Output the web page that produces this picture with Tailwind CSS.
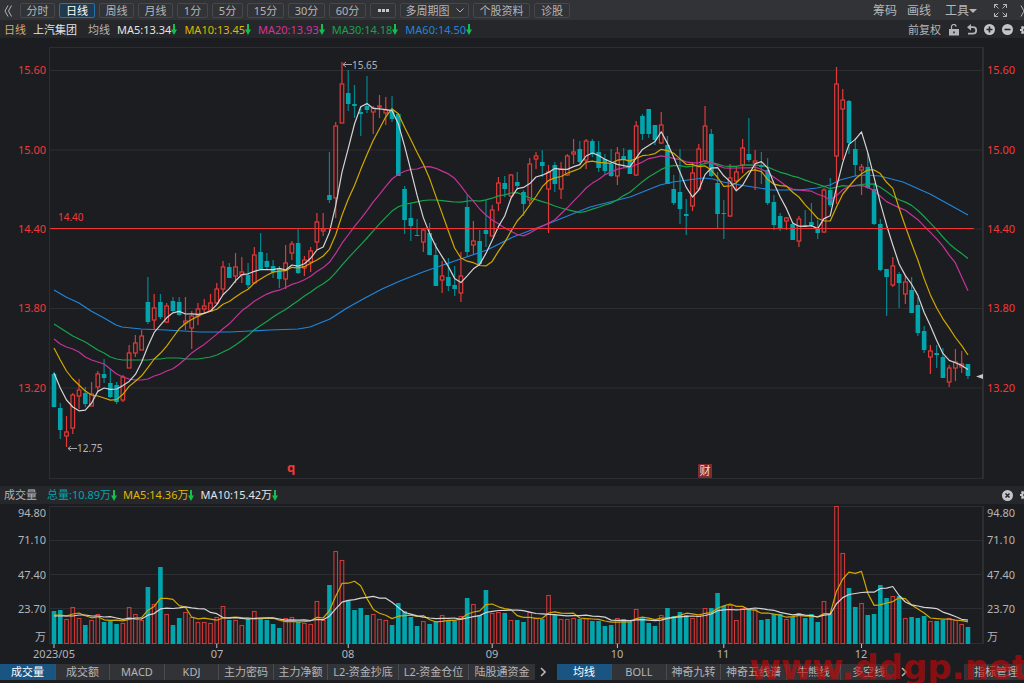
<!DOCTYPE html>
<html lang="zh-CN">
<head>
  <meta charset="UTF-8" />
  <meta name="viewport" content="width=device-width, initial-scale=1.0" />
  <title>上汽集团 日线</title>
  <script src="https://cdn.jsdelivr.net/npm/@tailwindcss/browser@4"></script>
</head>
<body class="bg-[#1c1d20] text-[11px] text-[#b4b5b8] font-['Noto_Sans','Noto_Sans_CJK_SC',sans-serif] overflow-x-hidden">
  <main class="relative overflow-hidden">

    <!-- toolbar -->
    <nav class="flex items-center h-5 pt-px bg-[#323337] overflow-hidden whitespace-nowrap">
      <button aria-label="收起" class="w-5 shrink-0 flex justify-center pr-1">
        <svg class="w-2 h-3" viewBox="0 0 8 12" fill="none" stroke="currentColor"><path d="M4 .5 1 6l3 5.500M7.500 .5l-3 5.500 3 5.500" /></svg>
      </button>
      <div class="flex gap-1 leading-[13px]">
        <button class="w-[35px] h-[15px] border border-[#46474b] rounded-xs">分时</button>
        <button class="w-9 h-[15px] border border-[#2474ac] rounded-xs bg-[#1f3a4f] text-white">日线</button>
        <button class="w-[35px] h-[15px] border border-[#46474b] rounded-xs">周线</button>
        <button class="w-[35px] h-[15px] border border-[#46474b] rounded-xs">月线</button>
        <button class="w-[31px] h-[15px] border border-[#46474b] rounded-xs">1分</button>
        <button class="w-[31px] h-[15px] border border-[#46474b] rounded-xs">5分</button>
        <button class="w-[37px] h-[15px] border border-[#46474b] rounded-xs">15分</button>
        <button class="w-[37px] h-[15px] border border-[#46474b] rounded-xs">30分</button>
        <button class="w-[37px] h-[15px] border border-[#46474b] rounded-xs">60分</button>
        <button aria-label="更多周期" class="w-[26px] h-[15px] border border-[#46474b] rounded-xs flex items-center justify-center gap-px">
          <i class="w-[3px] h-[3px] bg-[#c4c5c8]"></i><i class="w-[3px] h-[3px] bg-[#c4c5c8]"></i><i class="w-[3px] h-[3px] bg-[#c4c5c8]"></i>
        </button>
        <button class="w-[69px] h-[15px] border border-[#46474b] rounded-xs flex items-center justify-center gap-1.5">多周期图
          <svg class="w-2 h-[5px]" viewBox="0 0 8 5" fill="none" stroke="currentColor"><path d="M.5 .5 4 4 7.500 .5" /></svg>
        </button>
        <button class="w-[57px] h-[15px] border border-[#46474b] rounded-xs">个股资料</button>
        <button class="w-9 h-[15px] border border-[#46474b] rounded-xs">诊股</button>
      </div>
      <div class="ml-auto flex items-center text-xs leading-4">
        <button class="mr-2.5">筹码</button>
        <button class="mr-3.5">画线</button>
        <button class="flex items-center mr-[17px]">工具
          <svg class="w-2 h-1" viewBox="0 0 8 4" fill="currentColor"><path d="M0 0h8L4 4z" /></svg>
        </button>
        <button aria-label="全屏">
          <svg class="w-[13px] h-[13px]" viewBox="0 0 13 13" fill="none" stroke="currentColor"><path d="M.5 4V.5H4M.5 .5l4 4M9 .5h3.500V4M12.500 .5l-4 4M.5 9v3.500H4M.5 12.500l4-4M9 12.500h3.500V9M12.500 12.500l-4-4" /></svg>
        </button>
        <button aria-label="展开" class="ml-[13px] w-1 overflow-hidden">
          <svg class="w-2 h-3" viewBox="0 0 8 12" fill="none" stroke="currentColor"><path d="M1 .5 4 6l-3 5.500M4.500 .5l3 5.500-3 5.500" /></svg>
        </button>
      </div>
    </nav>

    <!-- moving averages legend -->
    <header class="flex items-center h-[18px] pl-1 pt-px bg-[#26272a] overflow-hidden whitespace-nowrap leading-[18px]">
      <span class="text-[#dca671] mr-[7px]">日线</span>
      <h1 class="text-[#e4e4e6] mr-[11px]">上汽集团</h1>
      <span class="mr-[7px]">均线</span>
      <ul class="flex gap-[7px]">
        <li class="flex items-center text-[#e4e4e6]">MA5:13.34<svg class="w-[6px] h-[11px]"><use href="#down" /></svg></li>
        <li class="flex items-center text-[#dfb800]">MA10:13.45<svg class="w-[6px] h-[11px]"><use href="#down" /></svg></li>
        <li class="flex items-center text-[#d4339c]">MA20:13.93<svg class="w-[6px] h-[11px]"><use href="#down" /></svg></li>
        <li class="flex items-center text-[#16a44c]">MA30:14.18<svg class="w-[6px] h-[11px]"><use href="#down" /></svg></li>
        <li class="flex items-center text-[#1f86dc]">MA60:14.50<svg class="w-[6px] h-[11px]"><use href="#down" /></svg></li>
      </ul>
      <div class="ml-auto flex items-center">
        <button class="mr-2">前复权</button>
        <button aria-label="锁定" class="mr-2">
          <svg class="w-2.5 h-3" viewBox="0 0 10 12"><path d="M2.500 5V3a2.300 2.300 0 0 1 4.600-.4" fill="none" stroke="currentColor" stroke-width="1.200" /><path fill="currentColor" fill-rule="evenodd" d="M0 5h10v6.500H0zM4.200 7.500h1.600v1.800H4.200z" /></svg>
        </button>
        <button aria-label="撤销" class="mr-[7px]">
          <svg class="w-2.5 h-[11px]" viewBox="0 0 10 11"><path d="M2.500 3.200H6a3.200 3.200 0 0 1 0 6.400H1" fill="none" stroke="currentColor" stroke-width="1.700" /><path fill="currentColor" d="M0 3.200 4 0v6.400z" /></svg>
        </button>
        <button aria-label="放大" class="mr-[7px]">
          <svg class="w-[11px] h-[11px]" viewBox="0 0 11 11"><circle cx="5.500" cy="5.500" r="5.500" fill="#c4c5c8" /><path d="M5.500 2.500v6M2.500 5.500h6" stroke="#26272a" stroke-width="1.600" /></svg>
        </button>
        <button aria-label="缩小" class="mr-[7px]">
          <svg class="w-[11px] h-[11px]" viewBox="0 0 11 11"><circle cx="5.500" cy="5.500" r="5.500" fill="#c4c5c8" /><path d="M2.500 5.500h6" stroke="#26272a" stroke-width="1.600" /></svg>
        </button>
        <button aria-label="设置" class="w-1 overflow-hidden"><svg class="w-2.5 h-2.5"><use href="#gear" /></svg></button>
      </div>
    </header>

    <!-- price chart -->
    <svg class="block w-full h-auto" viewBox="0 38 1024 448" role="img" aria-label="日K线">
      <g fill="none" class="stroke-[#2d2e32]">
        <path d="M49.500 47.500H983M49.500 478.500H983M50 70.500h933M50 150h933M50 229h933M50 308.500h933M50 388h933M49.500 47v432" />
        <path d="M983 47v432" stroke-width="2" />
      </g>
      <g id="candles" stroke-width="1.200"></g>
      <g id="averages" fill="none" stroke-width="1.200" stroke-linejoin="round"></g>
      <path d="M50 228.500h924" class="stroke-[#ee3434]" stroke-width="1.200" />
      <g class="fill-[#f03a3a]">
        <g text-anchor="end">
          <text x="46" y="74">15.60</text><text x="46" y="154">15.00</text><text x="46" y="233">14.40</text><text x="46" y="312">13.80</text><text x="46" y="392">13.20</text>
        </g>
        <text x="987" y="74">15.60</text><text x="987" y="154">15.00</text><text x="987" y="233">14.40</text><text x="987" y="312">13.80</text><text x="987" y="392">13.20</text>
        <text x="58" y="221" class="text-[10px]">14.40</text>
        <text x="287" y="472" class="text-[13px] font-bold">q</text>
      </g>
      <g class="fill-[#b4b5b8] text-[10px]">
        <text x="352" y="69">15.65</text>
        <text x="77" y="452">12.75</text>
      </g>
      <path d="M343 64.500h9M346 62l-3 2.500 3 2.500M68 448.500h9M71 446l-3 2.500 3 2.500" fill="none" class="stroke-[#a4a5a8]" />
      <path d="M976 376.500l7-2.500v5z" class="fill-[#c4c5c8]" />
      <rect x="698" y="464" width="14" height="14" rx="1" class="fill-[#842a2e]" />
      <text x="705" y="475" text-anchor="middle" class="fill-[#e8dede] text-[11px]">财</text>
    </svg>

    <!-- volume legend -->
    <header class="flex items-center h-[18px] pl-1 bg-[#26272a] overflow-hidden whitespace-nowrap leading-[18px]">
      <h2 class="mr-2.5">成交量</h2>
      <ul class="flex gap-1.5">
        <li class="flex items-center text-[#00a5ad]">总量:10.89万<svg class="w-[6px] h-[11px]"><use href="#down" /></svg></li>
        <li class="flex items-center text-[#dfb800]">MA5:14.36万<svg class="w-[6px] h-[11px]"><use href="#down" /></svg></li>
        <li class="flex items-center text-[#e4e4e6]">MA10:15.42万<svg class="w-[6px] h-[11px]"><use href="#down" /></svg></li>
      </ul>
      <div class="ml-auto flex items-center">
        <button aria-label="关闭" class="mr-[7px]">
          <svg class="w-[11px] h-[11px]" viewBox="0 0 11 11"><circle cx="5.500" cy="5.500" r="5.500" fill="#c4c5c8" /><path d="M3.500 3.500l4 4M7.500 3.500l-4 4" stroke="#26272a" stroke-width="1.500" /></svg>
        </button>
        <button aria-label="设置" class="w-1 overflow-hidden"><svg class="w-2.5 h-2.5"><use href="#gear" /></svg></button>
      </div>
    </header>

    <!-- volume chart -->
    <svg class="block w-full h-auto" viewBox="0 504 1024 160" role="img" aria-label="成交量">
      <g fill="none" class="stroke-[#2d2e32]">
        <path d="M49.500 506.500H983M50 540.500h933M50 574.500h933M50 608.500h933M50 643.500h933M49.500 506v138" />
        <path d="M983 506v138" stroke-width="2" />
      </g>
      <g id="volumes" stroke-width="1.100"></g>
      <g id="volumeAverages" fill="none" stroke-width="1.200" stroke-linejoin="round"></g>
      <path id="ticks" class="stroke-[#c4c5c8]" />
      <g class="fill-[#b4b5b8]">
        <g text-anchor="end">
          <text x="46" y="517">94.80</text><text x="46" y="544">71.10</text><text x="46" y="579">47.40</text><text x="46" y="613">23.70</text><text x="46" y="641">万</text>
        </g>
        <text x="987" y="517">94.80</text><text x="987" y="544">71.10</text><text x="987" y="579">47.40</text><text x="987" y="613">23.70</text><text x="987" y="641">万</text>
        <g text-anchor="middle">
          <text x="54" y="658">2023/05</text><text x="217" y="658">07</text><text x="348" y="658">08</text><text x="492" y="658">09</text><text x="617" y="658">10</text><text x="723" y="658">11</text><text x="861" y="658">12</text>
        </g>
      </g>
    </svg>

    <!-- indicator tabs -->
    <footer class="flex items-center mb-[3px] h-4 leading-4 whitespace-nowrap overflow-hidden">
      <div class="flex divide-x divide-[#4a4b4f] bg-[#323337]">
        <button class="w-14 h-4 bg-[#1a5480] text-white">成交量</button>
        <button class="w-[54px] h-4">成交额</button>
        <button class="w-[55px] h-4">MACD</button>
        <button class="w-[54px] h-4">KDJ</button>
        <button class="w-[55px] h-4">主力密码</button>
        <button class="w-[54px] h-4">主力净额</button>
        <button class="w-[71px] h-4">L2-资金抄底</button>
        <button class="w-[70px] h-4">L2-资金仓位</button>
        <button class="w-[66px] h-4">陆股通资金</button>
      </div>
      <button aria-label="更多指标" class="w-[22px] flex justify-center pr-1.5">
        <svg class="w-1.5 h-2.5" viewBox="0 0 6 10" fill="none" stroke="currentColor" stroke-width="1.600"><path d="M1 1l4 4-4 4" /></svg>
      </button>
      <div class="flex divide-x divide-[#4a4b4f] bg-[#323337]">
        <button class="w-[55px] h-4 bg-[#1a5480] text-white">均线</button>
        <button class="w-[55px] h-4">BOLL</button>
        <button class="w-[54px] h-4">神奇九转</button>
        <button class="w-[66px] h-4">神奇五线谱</button>
        <button class="w-[54px] h-4">牛熊线</button>
        <button class="w-[55px] h-4">多空线</button>
      </div>
      <button aria-label="更多均线" class="w-4 flex justify-center">
        <svg class="w-1.5 h-2.5" viewBox="0 0 6 10" fill="none" stroke="currentColor" stroke-width="1.600"><path d="M1 1l4 4-4 4" /></svg>
      </button>
      <button class="ml-auto w-[60px] h-4 pl-1 bg-[#323337]">指标管理</button>
    </footer>

    <p class="absolute -right-1 bottom-0 text-[34px] leading-8 font-bold font-['DejaVu_Sans',sans-serif] text-[#c80808]/65 pointer-events-none">www.ddgp.net</p>
  </main>

  <svg class="hidden">
    <symbol id="down" viewBox="0 0 6 11"><path d="M2 0h2v5.500h2L3 11 0 5.500h2z" fill="#12c04e" /></symbol>
    <symbol id="gear" viewBox="0 0 10 10"><circle cx="5" cy="5" r="2.800" fill="none" stroke="#c4c5c8" stroke-width="2" /><path d="M5 0v2M5 8v2M0 5h2M8 5h2M1.500 1.500l1.400 1.400M7.100 7.100l1.400 1.400M1.500 8.500l1.400-1.400M7.100 2.900l1.400-1.400" stroke="#c4c5c8" stroke-width="1.800" /></symbol>
  </svg>

  <script>
    // one entry per day: direction, wick top, body top, body bottom, wick bottom, volume top
    const days = `
      d 372 374 407 407 611|d 403 408 430 439 610|u 416 432 436 447 619|u 393 395 428 434 607|u 379 390 396 409 618|
      d 387 393 404 407 625|u 382 394 406 406 620|u 371 374 387 392 614|d 359 374 378 383 622|d 369 383 397 398 621|
      d 382 385 402 404 624|u 375 377 400 402 623|u 345 353 368 368 607|u 335 343 353 357 614|u 330 336 350 350 620|
      d 277 302 322 324 587|u 294 308 320 330 604|d 294 302 317 319 567|u 303 306 322 323 614|d 297 301 311 312 625|
      d 297 302 315 316 618|u 297 321 323 330 612|u 311 316 328 349 617|u 303 309 316 325 622|u 299 306 309 313 622|
      u 294 303 311 312 623|u 283 289 303 305 617|u 261 267 289 295 606|d 263 267 278 278 620|u 253 267 276 283 620|
      u 257 272 275 283 625|d 263 275 285 288 618|u 247 255 283 284 611|d 233 252 269 270 618|d 253 261 267 269 620|
      d 260 266 272 278 624|d 266 268 279 288 628|u 245 263 279 289 618|u 241 244 253 260 617|d 229 243 273 274 622|
      u 256 260 268 276 623|u 247 251 262 272 624|u 213 222 242 250 601|u 213 229 231 236 620|d 152 195 200 203 585|
      u 122 126 198 218 551|u 62 84 123 123 560|d 70 93 104 111 600|d 85 104 106 118 610|d 106 112 114 136 608|
      d 76 106 110 113 615|u 106 108 112 134 614|u 95 106 107 118 619|u 97 110 113 125 620|d 96 110 119 122 625|
      d 113 114 176 176 603|d 186 189 220 234 611|d 204 218 226 241 617|d 219 235 236 236 626|u 228 230 242 252 621|
      d 223 233 255 255 624|d 243 255 286 286 621|u 261 276 280 293 615|d 258 277 286 291 621|d 266 285 289 296 621|
      u 252 276 293 302 616|d 195 207 252 257 598|u 221 241 245 254 604|d 230 241 264 264 615|d 200 230 234 247 590|
      u 205 210 236 236 613|u 177 183 203 211 612|d 176 183 189 197 613|u 174 175 196 197 620|d 172 182 186 190 620|
      d 190 192 204 216 622|u 158 164 200 204 612|u 152 156 159 169 618|d 150 162 166 177 619|u 165 172 189 233 595|
      d 162 165 184 192 615|u 162 169 189 199 619|u 154 156 175 176 619|u 139 152 154 164 618|d 141 149 162 165 619|
      u 139 141 160 169 618|d 139 141 154 157 621|d 141 152 168 172 621|d 154 159 171 175 626|d 149 164 176 177 625|
      u 147 153 176 185 618|d 148 156 160 168 619|d 149 150 174 174 622|u 121 126 175 176 609|d 114 116 134 140 618|
      d 109 109 134 138 623|d 125 125 140 145 626|u 112 125 143 144 615|d 136 145 184 184 608|d 175 189 203 205 616|
      d 149 192 209 224 612|d 199 214 216 235 615|u 162 173 206 211 618|u 144 149 189 190 614|u 106 126 161 163 608|
      d 129 134 176 177 608|d 172 183 214 228 593|d 200 213 214 239 606|u 164 178 216 217 605|u 167 172 181 190 620|
      u 139 148 165 173 608|d 118 154 160 162 609|u 150 161 163 190 609|d 152 165 167 184 620|d 158 170 203 205 619|
      d 195 202 225 230 614|d 213 216 229 231 614|u 217 218 221 230 619|d 222 224 240 240 617|u 216 219 241 247 613|
      d 210 225 226 227 618|d 203 222 225 227 614|d 220 228 233 239 622|u 188 190 232 233 601|d 178 190 205 207 613|
      u 67 84 156 204 506|u 89 100 109 160 553|d 100 101 143 154 588|d 138 149 165 176 607|u 164 167 170 195 603|
      d 153 167 188 189 615|d 183 189 224 225 614|d 219 224 270 271 585|d 269 269 277 316 598|u 257 266 285 287 596|
      d 272 274 283 308 596|u 275 282 294 304 618|d 277 290 313 313 617|d 297 305 333 336 618|d 326 331 350 353 616|
      u 345 351 357 374 621|d 345 353 355 368 621|d 348 357 378 378 620|u 365 368 382 387 618|u 349 362 368 381 620|
      u 351 364 367 373 624|d 364 364 376 379 627`.split("|").map((row) => {
        const [dir, ...n] = row.trim().split(" ");
        const [high, top, bottom, low, vol] = n.map(Number);
        return { up: dir === "u", high, top, bottom, low, vol, close: dir === "u" ? top : bottom };
      });

    const x = (i) => 54 + i * 6.26;
    const volumeBase = 643;

    // moving average, the first values come from days before the visible range
    function average(values, n, lead) {
      return values.map((v, i) => {
        if (i < lead.length) return lead[i];
        const part = values.slice(Math.max(0, i - n + 1), i + 1);
        return part.reduce((a, b) => a + b, 0) / part.length;
      });
    }

    function line(values, cls) {
      const points = values.map((v, i) => `${x(i).toFixed(1)},${v.toFixed(1)}`).join(" ");
      return `<polyline class="${cls}" points="${points}" />`;
    }

    document.getElementById("candles").innerHTML = days.map((d, i) => {
      const h = Math.max(d.bottom - d.top, 1);
      if (d.up) {
        return `<path class="stroke-[#e23a3a]" d="M${x(i)} ${d.high}V${d.top}M${x(i)} ${d.bottom}V${d.low}" />
          <rect class="stroke-[#e23a3a]" fill="none" x="${x(i) - 1.8}" y="${d.top}" width="3.6" height="${h}" />`;
      }
      return `<path class="stroke-[#00888f]" d="M${x(i)} ${d.high}V${d.low}" />
        <rect class="fill-[#00a5ad]" x="${x(i) - 2.3}" y="${d.top}" width="4.6" height="${h}" />`;
    }).join("");

    document.getElementById("volumes").innerHTML = days.map((d, i) => d.up
      ? `<rect class="stroke-[#cf3838]" fill="none" x="${x(i) - 1.8}" y="${d.vol + 0.5}" width="3.6" height="${volumeBase - d.vol}" />`
      : `<rect class="fill-[#00a5ad]" x="${x(i) - 2.3}" y="${d.vol}" width="4.6" height="${volumeBase + 1 - d.vol}" />`
    ).join("");

    const closes = days.map((d) => d.close);
    const vols = days.map((d) => d.vol);
    const lead20 = [339, 344, 347, 349, 352, 357, 360, 362, 364, 369, 374, 377, 379, 380, 380, 379, 376, 374, 371];
    const lead30 = [324, 328, 332, 336, 339, 342, 346, 350, 353, 357, 359, 360, 360, 360, 360, 360, 359, 359, 358, 358, 358, 359, 359, 359, 358, 357, 355, 352, 349];
    const ma60 = "54,290 66,297 79,303 91,311 104,318 116,325 122,327 141,329 166,330 200,332 230,332 250,331 270,330 298,329 310,327 330,319 347,308 365,298 382,289 400,281 423,272 443,265 487,250 513,237 550,223 570,215 590,207 630,197 660,185 673,182 703,178 713,179 723,182 740,185 772,190 800,190 817,188 830,185 840,180 855,176 865,175 880,176 903,182 930,194 950,205 968,215";

    document.getElementById("averages").innerHTML =
      `<polyline class="stroke-[#1f86dc]" points="${ma60}" />` +
      line(average(closes, 30, lead30), "stroke-[#16a44c]") +
      line(average(closes, 20, lead20), "stroke-[#c4339a]") +
      line(average(closes, 10, [348, 360, 371, 379, 385, 391, 395, 396, 398]), "stroke-[#d0a800]") +
      line(average(closes, 5, [373, 388, 400, 407]), "stroke-[#d4d4d6]");

    document.getElementById("volumeAverages").innerHTML =
      line(average(vols, 5, [615, 615, 616, 614]), "stroke-[#d0a800]") +
      line(average(vols, 10, [616, 616, 616, 616, 615, 615, 616, 616, 617]), "stroke-[#d4d4d6]");

    document.getElementById("ticks").setAttribute("d", [0, 26, 47, 70, 90, 107, 129].map((i) => `M${x(i)} 644v4`).join(""));
  </script>
</body>
</html>
